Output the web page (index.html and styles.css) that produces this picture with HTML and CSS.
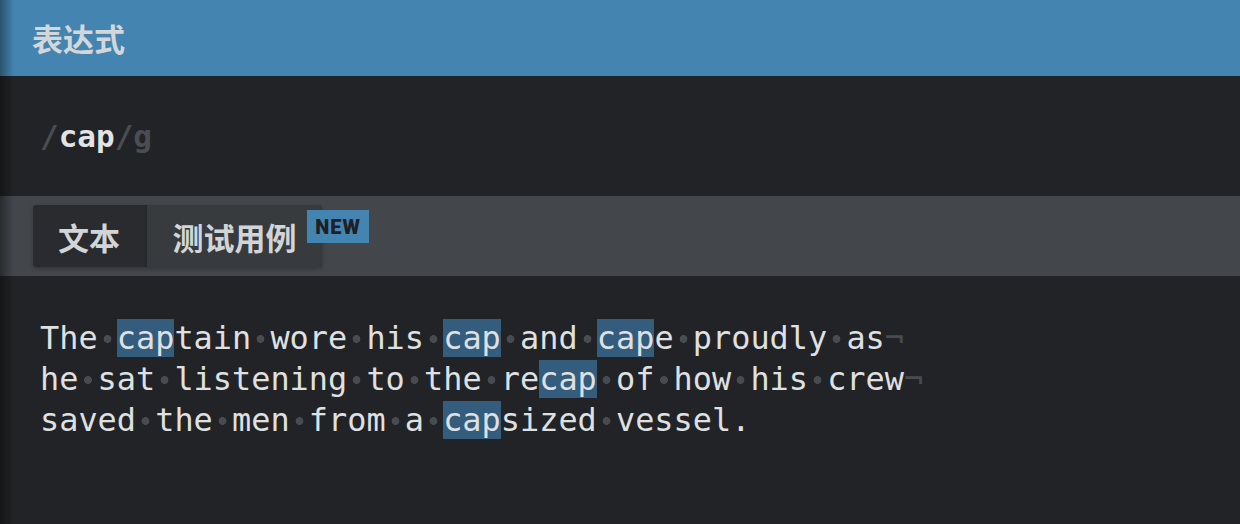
FILE: index.html
```html
<!DOCTYPE html>
<html lang="zh">
<head>
<meta charset="utf-8">
<title>表达式</title>
<link rel="stylesheet" href="styles.css">
</head>
<body>
<div class="app">
  <header class="title"><h1>表达式</h1></header>
  <section class="expr"><span class="delim">/</span><span class="pattern">cap</span><span class="delim">/</span><span class="flags">g</span></section>
  <nav class="tabbar">
    <div class="tabs">
      <div class="tab tab-active">文本</div>
      <div class="tab tab-other">测试用例<span class="badge">NEW</span></div>
    </div>
  </nav>
  <section class="source">
    <div class="line">The<span class="s"> </span><mark>cap</mark>tain<span class="s"> </span>wore<span class="s"> </span>his<span class="s"> </span><mark>cap</mark><span class="s"> </span>and<span class="s"> </span><mark>cap</mark>e<span class="s"> </span>proudly<span class="s"> </span>as<span class="nl">¬</span></div>
    <div class="line">he<span class="s"> </span>sat<span class="s"> </span>listening<span class="s"> </span>to<span class="s"> </span>the<span class="s"> </span>re<mark>cap</mark><span class="s"> </span>of<span class="s"> </span>how<span class="s"> </span>his<span class="s"> </span>crew<span class="nl">¬</span></div>
    <div class="line">saved<span class="s"> </span>the<span class="s"> </span>men<span class="s"> </span>from<span class="s"> </span>a<span class="s"> </span><mark>cap</mark>sized<span class="s"> </span>vessel.</div>
  </section>
</div>
</body>
</html>
```
FILE: styles.css
```css
html, body {
  margin: 0;
  padding: 0;
  background: #222326;
}

.app {
  position: relative;
  width: 1240px;
  height: 524px;
  overflow: hidden;
  background: #222326;
  font-family: "Noto Sans CJK SC", "Noto Sans", sans-serif;
}

.app::before {
  content: "";
  position: absolute;
  left: 0;
  top: 0;
  bottom: 0;
  width: 14px;
  background: linear-gradient(to right, rgba(0, 0, 0, 0.38), rgba(0, 0, 0, 0));
  pointer-events: none;
  z-index: 5;
}

.title {
  height: 76px;
  background: #4484b0;
  display: flex;
  align-items: center;
  padding-left: 32px;
  box-sizing: border-box;
}

.title h1 {
  margin: 0;
  font-size: 31px;
  font-weight: 700;
  color: #d4d7da;
  line-height: 1;
  position: relative;
  top: -1px;
}

.expr {
  height: 120px;
  box-sizing: border-box;
  padding-left: 40px;
  display: flex;
  align-items: center;
  font-family: "DejaVu Sans Mono", monospace;
  font-weight: 700;
  font-size: 31px;
  white-space: pre;
}

.expr .delim,
.expr .flags {
  color: #4a4d52;
}

.expr .pattern {
  color: #e2e3e5;
}

.tabbar {
  height: 80px;
  background: #43474b;
  box-sizing: border-box;
  padding: 9px 0 0 33px;
}

.tabs {
  display: inline-flex;
  height: 62px;
  gap: 2px;
  background: #28292c;
  border-radius: 4px;
  box-shadow: 0 2px 4px rgba(0, 0, 0, 0.25);
}

.tab {
  position: relative;
  display: flex;
  align-items: center;
  justify-content: center;
  font-size: 31px;
  font-weight: 700;
  color: #d2d5d8;
}

.tab-active {
  width: 112px;
  background: #2a2b2e;
  border-radius: 4px 0 0 4px;
}

.tab-other {
  width: 175px;
  background: #383b3e;
  border-radius: 0 4px 4px 0;
}

.badge {
  position: absolute;
  left: 160px;
  top: 5px;
  width: 62px;
  height: 33px;
  background: #4484b0;
  color: #1d2125;
  font-family: Roboto, "DejaVu Sans", sans-serif;
  font-size: 20px;
  font-weight: 900;
  letter-spacing: 1px;
  line-height: 1;
  display: flex;
  align-items: center;
  justify-content: center;
}

.source {
  padding: 42px 0 0 40px;
  font-family: "DejaVu Sans Mono", monospace;
  font-size: 31.9px;
  line-height: 41px;
  color: #dfe0e2;
}

.line {
  white-space: pre;
  height: 41px;
}

.source mark {
  background: #335c7d;
  color: #dfe0e2;
}

.source .s {
  display: inline-block;
  width: 1ch;
  height: 41px;
  vertical-align: top;
  background: radial-gradient(circle at 50% 21px, #484b4f 3.6px, rgba(72, 75, 79, 0) 4.2px);
}

.source .nl {
  color: #484b4f;
}
```
